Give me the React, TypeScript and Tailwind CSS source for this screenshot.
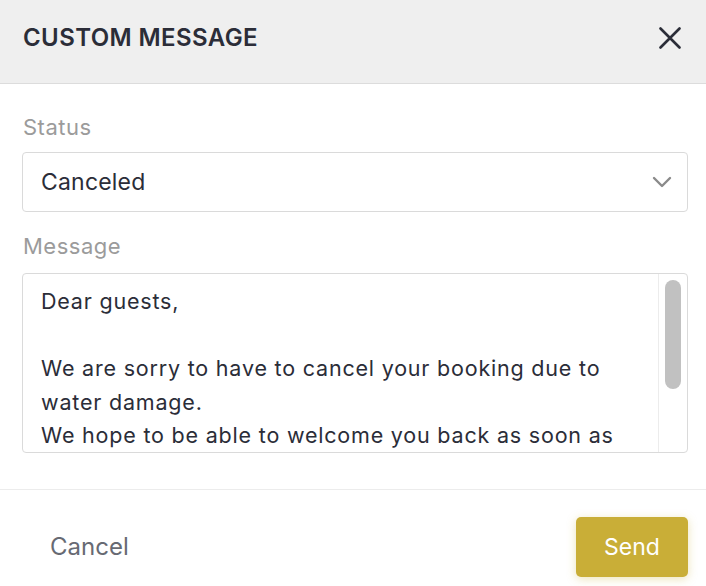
const font = { fontFamily: 'Inter, "Noto Sans", sans-serif' }

export default function App() {
  return (
    <div className="w-[706px] h-[586px] bg-white flex flex-col overflow-hidden" style={font}>
      {/* header */}
      <div className="h-[84px] shrink-0 bg-[#efefef] border-b border-[#dcdcdc] flex items-center justify-between pl-[23px] pr-[25px] pb-[8px]">
        <h1 className="text-[24px] font-semibold text-[#2b2d38] tracking-[0.4px] uppercase">Custom message</h1>
        <button className="text-[#2b2d38]">
          <svg width="22" height="22" viewBox="0 0 22 22" fill="none" stroke="currentColor" strokeWidth="2.6" strokeLinecap="round">
            <path d="M1.5 1.5l19 19M20.5 1.5l-19 19" />
          </svg>
        </button>
      </div>

      {/* body */}
      <div className="shrink-0 flex flex-col pl-[22px] pr-[18px] pt-[30px] pb-[36px] border-b border-[#ececec]">
        <label className="text-[22px] leading-[26px] tracking-[0.5px] text-[#9b9b9b] pl-px">Status</label>
        <div className="mt-[12px] h-[60px] rounded-[4px] border border-[#dadada] flex items-center justify-between pl-[18px] pr-[9px]">
          <span className="text-[23px] tracking-[0.2px] text-[#2b2d38]">Canceled</span>
          <svg width="32" height="32" viewBox="0 0 24 24" fill="none" stroke="#8a8a8a" strokeWidth="1.8" strokeLinecap="round" strokeLinejoin="round">
            <path d="m6 9 6 6 6-6" />
          </svg>
        </div>
        <label className="mt-[21px] text-[22px] leading-[26px] tracking-[0.5px] text-[#9b9b9b] pl-px">Message</label>
        <div className="mt-[14px] h-[180px] rounded-[4px] border border-[#dadada] flex overflow-hidden">
          <div className="flex-1 overflow-hidden pl-[18px] pr-[20px] pt-[11px] text-[21.5px] leading-[33.5px] tracking-[0.8px] text-[#2b2d38]">
            <p>Dear guests,</p>
            <p>&nbsp;</p>
            <p>We are sorry to have to cancel your booking due to water damage.</p>
            <p>We hope to be able to welcome you back as soon as possible.</p>
          </div>
          <div className="w-[29px] shrink-0 border-l border-[#ececec] pt-[6px] flex justify-center">
            <div className="w-[16px] h-[109px] rounded-full bg-[#c1c1c1]" />
          </div>
        </div>
      </div>

      {/* footer */}
      <div className="flex items-center justify-between pt-[27px] pl-[50px] pr-[18px]">
        <button className="text-[24px] text-[#676a73]">Cancel</button>
        <button className="w-[112px] h-[60px] rounded-[5px] bg-[#c9ae37] text-white text-[23px] shadow-[0_2px_10px_rgba(201,174,55,0.35)]">
          Send
        </button>
      </div>
    </div>
  )
}
